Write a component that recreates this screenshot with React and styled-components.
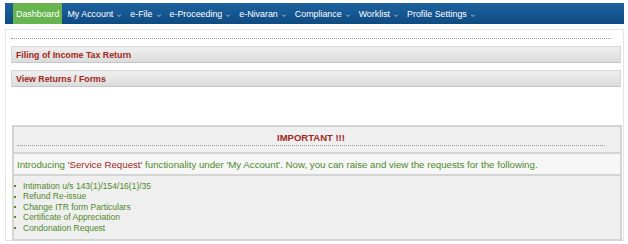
import React from "react";
import styled, { createGlobalStyle } from "styled-components";

const Global = createGlobalStyle`
  html, body { margin: 0; padding: 0; background: #fff; }
  body { font-family: "Liberation Sans", Arial, sans-serif; }
`;

const Page = styled.div`
  width: 628px;
  height: 244px;
  padding: 3px 3px 0 5px;
  box-sizing: border-box;
  overflow: hidden;
`;

const Nav = styled.nav`
  display: flex;
  align-items: stretch;
  height: 21px;
  width: 619px;
  padding-left: 8px;
  box-sizing: border-box;
  background: linear-gradient(#1d639d, #155590 55%, #0f4b82);
`;

const NavItem = styled.div`
  display: flex;
  align-items: center;
  gap: 4px;
  padding: ${(p) => (p.$active ? "0 3px" : "0 4px 0 5px")};
  color: #fff;
  font-size: 8.9px;
  background: ${(p) => (p.$active ? "#68b44f" : "transparent")};
  white-space: nowrap;
`;

const Caret = styled.svg`
  width: 4px;
  height: 3px;
  margin-top: 3px;
`;

const Panel = styled.div`
  margin-top: 5px;
  width: 619px;
  height: 212px;
  box-sizing: border-box;
  border: 1px solid #e4e4e4;
  padding: 6px 2px 0 5px;
`;

const Dashes = styled.div`
  width: 600px;
  border-top: 1px dotted #9a9a9a;
  margin: 2px 0 7px;
`;

const Bar = styled.div`
  height: 17px;
  box-sizing: border-box;
  margin-bottom: 7px;
  padding-left: 4px;
  display: flex;
  align-items: center;
  border: 1px solid #d6d6d6;
  border-bottom-color: #c6c6c6;
  background: linear-gradient(#efefef, #dcdcdc);
  color: #a0281c;
  font-weight: bold;
  font-size: 8.8px;
`;

const Important = styled.div`
  margin: 38px 0 0 1px;
  width: 610px;
  box-sizing: border-box;
  border: 2px solid #d4d4d4;
  background: #efefef;
`;

const ImpHead = styled.div`
  height: 25px;
  box-sizing: border-box;
  padding: 0 15px 0 3px;
  display: flex;
  align-items: flex-start;
`;

const ImpTitle = styled.div`
  flex: 1;
  text-align: center;
  color: #a0281c;
  font-weight: bold;
  font-size: 9.5px;
  padding-top: 6px;
  padding-bottom: 2px;
  border-bottom: 1px dotted #9a9a9a;
  height: 10px;
  line-height: 10px;
`;

const Intro = styled.div`
  height: 24px;
  box-sizing: border-box;
  border-top: 2px solid #d4d4d4;
  border-bottom: 2px solid #d4d4d4;
  background: #f6f6f6;
  display: flex;
  align-items: center;
  padding-left: 3px;
  color: #4f8a2a;
  font-size: 9.7px;
`;

const Red = styled.span`
  color: #a0281c;
`;

const List = styled.ul`
  margin: 0;
  padding: 5px 0 6px 0;
  list-style: none;
`;

const Item = styled.li`
  display: flex;
  align-items: center;
  color: #4f8a2a;
  font-size: 8.5px;
  line-height: 10.4px;
  &::before {
    content: "";
    width: 2px;
    height: 2px;
    background: #4f8a2a;
    margin-right: 7px;
  }
`;

const navItems = [
  "My Account",
  "e-File",
  "e-Proceeding",
  "e-Nivaran",
  "Compliance",
  "Worklist",
  "Profile Settings",
];

const items = [
  "Intimation u/s 143(1)/154/16(1)/35",
  "Refund Re-issue",
  "Change ITR form Particulars",
  "Certificate of Appreciation",
  "Condonation Request",
];

export default function App() {
  return (
    <Page>
      <Global />
      <Nav>
        <NavItem $active>Dashboard</NavItem>
        {navItems.map((n) => (
          <NavItem key={n}>
            {n}
            <Caret viewBox="0 0 4 3">
              <path d="M0 0.5 L2 2.5 L4 0.5" fill="none" stroke="#a9bfd6" strokeWidth="1" />
            </Caret>
          </NavItem>
        ))}
      </Nav>
      <Panel>
        <Dashes />
        <Bar>Filing of Income Tax Return</Bar>
        <Bar>View Returns / Forms</Bar>
        <Important>
          <ImpHead>
            <ImpTitle>IMPORTANT !!!</ImpTitle>
          </ImpHead>
          <Intro>
            Introducing&nbsp;<Red>'Service Request'</Red>&nbsp;functionality under 'My
            Account'. Now, you can raise and view the requests for the following.
          </Intro>
          <List>
            {items.map((i) => (
              <Item key={i}>{i}</Item>
            ))}
          </List>
        </Important>
      </Panel>
    </Page>
  );
}
